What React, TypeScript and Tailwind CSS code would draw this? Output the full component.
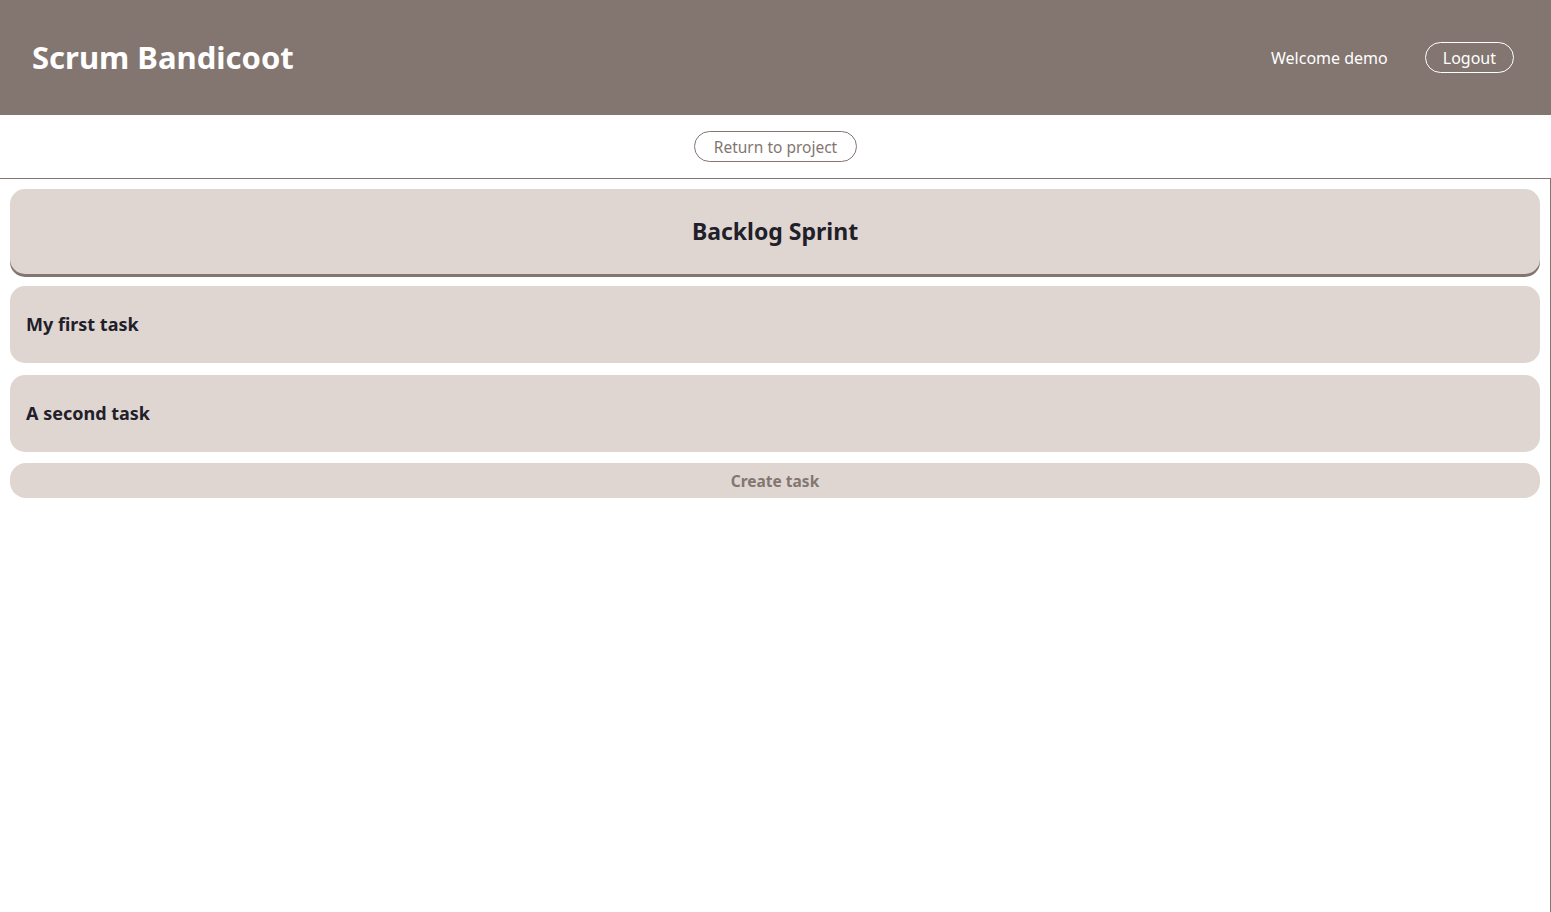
function Header() {
  return (
    <header className="h-[115px] bg-[#837670] flex items-center justify-between pl-[32px] pr-[37px]">
      <h1 className="text-[31px] font-bold text-white">Scrum Bandicoot</h1>
      <div className="flex items-center gap-[37px]">
        <span className="text-[16px] text-white">Welcome demo</span>
        <button className="h-[31px] px-[17px] rounded-full border border-white text-[16px] text-white">
          Logout
        </button>
      </div>
    </header>
  );
}

function TaskCard({ title }: { title: string }) {
  return (
    <div className="h-[77px] bg-[#dfd6d2] rounded-[15px] flex items-center px-[16px]">
      <span className="text-[18px] font-bold text-[#1f2029]">{title}</span>
    </div>
  );
}

export default function App() {
  return (
    <div className="min-h-screen bg-white font-['Noto_Sans',sans-serif]">
      <Header />
      <div className="h-[63px] flex items-center justify-center pb-[1px]">
        <button className="h-[31px] px-[19px] pt-[3px] leading-none rounded-full border border-[#837670] text-[15.5px] text-[#837670]">
          Return to project
        </button>
      </div>
      <main className="min-h-[734px] border-t border-r border-[#837670] px-[10px] pt-[10px] flex flex-col gap-[12px]">
        <div className="h-[85px] bg-[#dfd6d2] rounded-[15px] shadow-[0_3px_0_#837670] flex items-center justify-center">
          <h2 className="text-[23px] font-bold text-[#1f2029]">Backlog Sprint</h2>
        </div>
        <TaskCard title="My first task" />
        <TaskCard title="A second task" />
        <button className="-mt-px h-[35px] pt-[2px] bg-[#dfd6d2] rounded-[16px] text-[15.5px] font-bold text-[#837670]">
          Create task
        </button>
      </main>
    </div>
  );
}
